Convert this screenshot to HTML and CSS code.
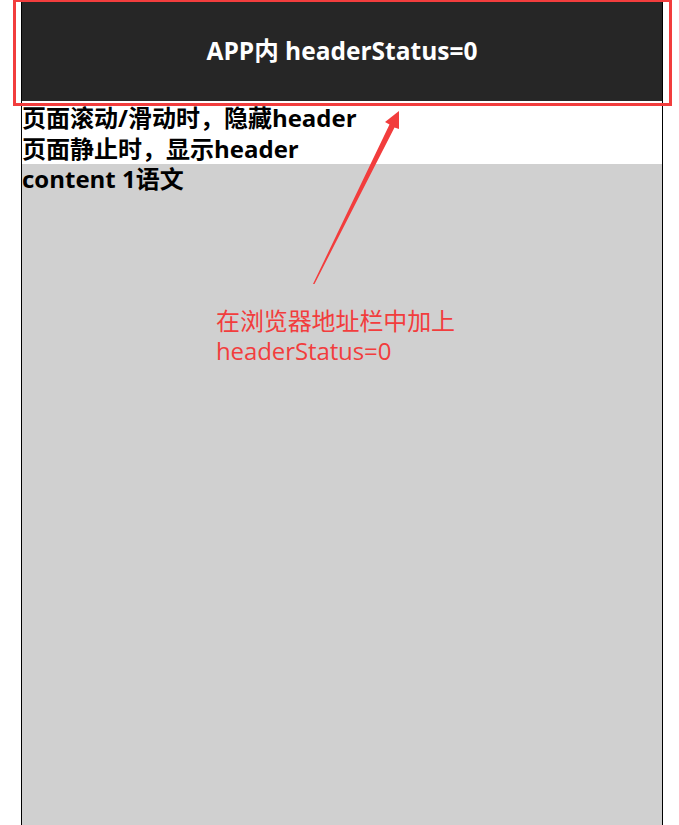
FILE: index.html
```html
<!DOCTYPE html>
<html lang="zh-CN">
<head>
<meta charset="utf-8">
<title>headerStatus</title>
<link rel="stylesheet" href="styles.css">
</head>
<body>
<div class="page">
  <header class="app-header">APP内 headerStatus=0</header>
  <div class="tips">
    <p>页面滚动/滑动时，隐藏header</p>
    <p>页面静止时，显示header</p>
  </div>
  <main class="content">
    <p>content 1语文</p>
  </main>
</div>

<div class="mark-box"></div>
<svg class="mark-arrow" width="679" height="825" viewBox="0 0 679 825">
  <polygon points="313,284 389.5,124.5 385,122 399,111 399,129 394.5,127.5 314.5,284" fill="#f23d3d"/>
</svg>
<div class="mark-note">在浏览器地址栏中加上<br>headerStatus=0</div>
</body>
</html>
```
FILE: styles.css
```css
html, body {
  margin: 0;
  padding: 0;
  background: #fff;
}
body {
  font-family: "Open Sans", "Noto Sans CJK SC", sans-serif;
  height: 825px;
  overflow: hidden;
  position: relative;
}
.page {
  margin-left: 21px;
  width: 640px;
  border-left: 1px solid #000;
  border-right: 1px solid #000;
  height: 825px;
  display: flex;
  flex-direction: column;
  background: #fff;
}
.app-header {
  height: 101px;
  flex: none;
  background: #262626;
  color: #fff;
  font-weight: bold;
  font-size: 24.5px;
  display: flex;
  align-items: center;
  justify-content: center;
  padding-bottom: 2px;
  box-sizing: border-box;
}
.tips {
  flex: none;
  padding-top: 2px;
  height: 63px;
  box-sizing: border-box;
}
.tips p, .content p {
  margin: 0;
  font-weight: bold;
  font-size: 24px;
  line-height: 30.5px;
  color: #000;
}
.content {
  flex: 1;
  background: #d0d0d0;
}
.mark-box {
  position: absolute;
  left: 13px;
  top: -1px;
  width: 653px;
  height: 101px;
  border: 3px solid #f23d3d;
}
.mark-arrow {
  position: absolute;
  left: 0;
  top: 0;
}
.mark-note {
  position: absolute;
  left: 216px;
  top: 306px;
  font-size: 24px;
  letter-spacing: -0.1px;
  line-height: 30px;
  color: #f23d3d;
}
```
